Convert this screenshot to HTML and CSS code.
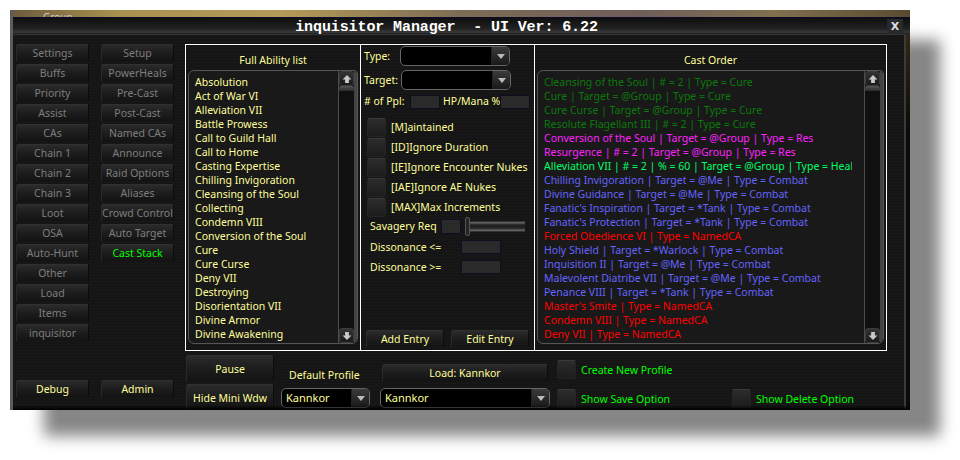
FILE: index.html
```html
<!DOCTYPE html>
<html lang="en">
<head>
<meta charset="utf-8">
<title>inquisitor Manager</title>
<link rel="stylesheet" href="styles.css">
</head>
<body>
<div class="window">
  <div class="backdrop"><span class="backdrop-label">Group</span></div>
  <header class="titlebar">
    <h1 class="title">inquisitor Manager  - UI Ver: 6.22</h1>
    <button class="close">X</button>
  </header>
  <div class="body">
    <nav class="sidebar">
      <div class="nav-cols">
        <div class="nav-col">
          <button class="nav">Settings</button>
          <button class="nav">Buffs</button>
          <button class="nav">Priority</button>
          <button class="nav">Assist</button>
          <button class="nav">CAs</button>
          <button class="nav">Chain 1</button>
          <button class="nav">Chain 2</button>
          <button class="nav">Chain 3</button>
          <button class="nav">Loot</button>
          <button class="nav">OSA</button>
          <button class="nav">Auto-Hunt</button>
          <button class="nav">Other</button>
          <button class="nav">Load</button>
          <button class="nav">Items</button>
          <button class="nav">inquisitor</button>
        </div>
        <div class="nav-col">
          <button class="nav">Setup</button>
          <button class="nav">PowerHeals</button>
          <button class="nav">Pre-Cast</button>
          <button class="nav">Post-Cast</button>
          <button class="nav">Named CAs</button>
          <button class="nav">Announce</button>
          <button class="nav">Raid Options</button>
          <button class="nav">Aliases</button>
          <button class="nav">Crowd Control</button>
          <button class="nav">Auto Target</button>
          <button class="nav active">Cast Stack</button>
        </div>
      </div>
      <div class="nav-bottom">
        <button class="nav gold">Debug</button>
        <button class="nav gold">Admin</button>
      </div>
    </nav>
    <main class="content">
      <div class="panels">
        <section class="panel panel-abilities">
          <h2 class="panel-title">Full Ability list</h2>
          <div class="listbox">
            <ul class="list gold-text">
              <li>Absolution</li>
              <li>Act of War VI</li>
              <li>Alleviation VII</li>
              <li>Battle Prowess</li>
              <li>Call to Guild Hall</li>
              <li>Call to Home</li>
              <li>Casting Expertise</li>
              <li>Chilling Invigoration</li>
              <li>Cleansing of the Soul</li>
              <li>Collecting</li>
              <li>Condemn VIII</li>
              <li>Conversion of the Soul</li>
              <li>Cure</li>
              <li>Cure Curse</li>
              <li>Deny VII</li>
              <li>Destroying</li>
              <li>Disorientation VII</li>
              <li>Divine Armor</li>
              <li>Divine Awakening</li>
            </ul>
            <div class="scroll">
              <span class="scroll-btn"><svg viewBox="0 0 9 9" class="arrow"><path d="M4.5 1L8.5 5H6.2v3H2.8V5H.5z"/></svg></span>
              <span class="scroll-thumb"></span>
              <span class="scroll-track"></span>
              <span class="scroll-btn"><svg viewBox="0 0 9 9" class="arrow"><path d="M4.5 8L.5 4h2.3V1h3.4v3h2.3z"/></svg></span>
            </div>
          </div>
        </section>
        <section class="panel panel-form">
          <div class="form-top">
            <div class="field-row">
              <label class="field-label type-label">Type:</label>
              <div class="combo combo-form"><span class="combo-value"></span><span class="combo-btn"><svg viewBox="0 0 10 6" class="caret"><path d="M0 0h10L5 6z"/></svg></span></div>
            </div>
            <div class="field-row">
              <label class="field-label target-label">Target:</label>
              <div class="combo combo-form"><span class="combo-value"></span><span class="combo-btn"><svg viewBox="0 0 10 6" class="caret"><path d="M0 0h10L5 6z"/></svg></span></div>
            </div>
            <div class="field-row ppl-row">
              <label class="field-label ppl-label">#&nbsp;of Ppl:</label>
              <span class="input input-s"></span>
              <label class="field-label hp-label">HP/Mana %</label>
              <span class="input input-s"></span>
            </div>
          </div>
          <div class="checks">
            <div class="check-row"><span class="check"></span><span>[M]aintained</span></div>
            <div class="check-row"><span class="check"></span><span>[ID]Ignore Duration</span></div>
            <div class="check-row"><span class="check"></span><span>[IE]Ignore Encounter Nukes</span></div>
            <div class="check-row"><span class="check"></span><span>[IAE]Ignore AE Nukes</span></div>
            <div class="check-row"><span class="check"></span><span>[MAX]Max Increments</span></div>
          </div>
          <div class="savagery">
            <span class="savagery-label">Savagery Req</span>
            <span class="input input-xs"></span>
            <span class="slider"><span class="slider-thumb"></span></span>
          </div>
          <div class="diss-row"><span class="diss-label">Dissonance &lt;=</span><span class="input input-m"></span></div>
          <div class="diss-row"><span class="diss-label">Dissonance &gt;=</span><span class="input input-m"></span></div>
          <div class="entry-btns">
            <button class="nav gold entry">Add Entry</button>
            <button class="nav gold entry">Edit Entry</button>
          </div>
        </section>
        <section class="panel panel-order">
          <h2 class="panel-title">Cast Order</h2>
          <div class="listbox">
            <ul class="list order">
              <li class="c-cure">Cleansing of the Soul | # = 2 | Type = Cure</li>
              <li class="c-cure">Cure | Target = @Group | Type = Cure</li>
              <li class="c-cure">Cure Curse | Target = @Group | Type = Cure</li>
              <li class="c-cure">Resolute Flagellant III | # = 2 | Type = Cure</li>
              <li class="c-res">Conversion of the Soul | Target = @Group | Type = Res</li>
              <li class="c-res">Resurgence | # = 2 | Target = @Group | Type = Res</li>
              <li class="c-heal">Alleviation VII | # = 2 | % = 60 | Target = @Group | Type = Heal</li>
              <li class="c-combat">Chilling Invigoration | Target = @Me | Type = Combat</li>
              <li class="c-combat">Divine Guidance | Target = @Me | Type = Combat</li>
              <li class="c-combat">Fanatic's Inspiration | Target = *Tank | Type = Combat</li>
              <li class="c-combat">Fanatic's Protection | Target = *Tank | Type = Combat</li>
              <li class="c-named">Forced Obedience VI | Type = NamedCA</li>
              <li class="c-combat">Holy Shield | Target = *Warlock | Type = Combat</li>
              <li class="c-combat">Inquisition II | Target = @Me | Type = Combat</li>
              <li class="c-combat">Malevolent Diatribe VII | Target = @Me | Type = Combat</li>
              <li class="c-combat">Penance VIII | Target = *Tank | Type = Combat</li>
              <li class="c-named">Master's Smite | Type = NamedCA</li>
              <li class="c-named">Condemn VIII | Type = NamedCA</li>
              <li class="c-named">Deny VII | Type = NamedCA</li>
            </ul>
            <div class="scroll">
              <span class="scroll-btn"><svg viewBox="0 0 9 9" class="arrow"><path d="M4.5 1L8.5 5H6.2v3H2.8V5H.5z"/></svg></span>
              <span class="scroll-thumb"></span>
              <span class="scroll-track"></span>
              <span class="scroll-btn"><svg viewBox="0 0 9 9" class="arrow"><path d="M4.5 8L.5 4h2.3V1h3.4v3h2.3z"/></svg></span>
            </div>
          </div>
        </section>
      </div>
      <div class="footer">
        <div class="footer-btns">
          <button class="nav gold big">Pause</button>
          <button class="nav gold big">Hide Mini Wdw</button>
        </div>
        <div class="profile-default">
          <span class="gold-text default-label">Default Profile</span>
          <div class="combo combo-small"><span class="combo-value">Kannkor</span><span class="combo-btn"><svg viewBox="0 0 10 6" class="caret"><path d="M0 0h10L5 6z"/></svg></span></div>
        </div>
        <div class="profile-load">
          <button class="nav gold load">Load: Kannkor</button>
          <div class="combo combo-large"><span class="combo-value">Kannkor</span><span class="combo-btn"><svg viewBox="0 0 10 6" class="caret"><path d="M0 0h10L5 6z"/></svg></span></div>
        </div>
        <div class="profile-options">
          <div class="option-row"><span class="check"></span><span>Create New Profile</span></div>
          <div class="option-row"><span class="check"></span><span class="save-label">Show Save Option</span><span class="check"></span><span>Show Delete Option</span></div>
        </div>
      </div>
    </main>
  </div>
</div>
</body>
</html>
```

FILE: styles.css
```css
* { box-sizing: border-box; margin: 0; padding: 0; }
html, body { width: 960px; height: 460px; overflow: hidden; background: #fff; }
body { padding: 10px 50px 50px 10px; font: 10.5px/14px "Noto Sans", sans-serif; }
ul { list-style: none; }
button { font: inherit; }

.window {
  position: relative; width: 900px; height: 400px; display: flex; flex-direction: column; overflow: hidden;
  background: linear-gradient(#3a2f18, #0c0b08 30%, #0c0b08);
  border-left: 3px solid #5c5c5c;
  box-shadow: 32px 28px 14px -2px #868686;
  color: #ffff99;
}
.window::after {
  content: ""; position: absolute; left: 0; right: 0; bottom: 0; height: 5px;
  background: linear-gradient(transparent, #000);
}
.backdrop {
  height: 7px; flex: none; overflow: hidden; margin-left: -3px;
  background: linear-gradient(90deg, #6d5a3c 0, #a8914f 12%, #b49a58 30%, #7d6c55 50%, #6f5e5a 70%, #80704f 85%, #5a4a30 100%);
}
.backdrop-label { display: block; padding-left: 33px; color: #ccc; line-height: 14px; font-size: 10px; }
.titlebar {
  height: 17px; flex: none; display: flex; align-items: center; justify-content: center; position: relative;
  background: linear-gradient(#0a0a2a 0 1px, #0e0e0e 1px, #222 70%, #3a3a3a 90%, #161616);
  padding-top: 4px;
}
.title { font: bold 15px/14px "Liberation Mono", monospace; color: #fff; white-space: pre; letter-spacing: -.1px; padding-right: 30px; }
.close {
  position: absolute; right: 7px; top: 2px; width: 16px; height: 15px; border: 0;
  background: #262a2c; color: #ddd; font: bold 11px/15px "DejaVu Sans", sans-serif;
}
.body {
  flex: 1; display: flex; min-height: 0; margin-right: 4px;
  background: repeating-linear-gradient(0deg, #151515 0 2px, #181818 2px 3px);
  border-top: 1px solid #333; border-right: 2px solid #3a3a3a;
}

.sidebar { width: 172px; flex: none; padding: 9px 0 13px 3px; display: flex; flex-direction: column; justify-content: space-between; }
.nav-cols, .nav-bottom { display: flex; gap: 12px; }
.nav-col { display: flex; flex-direction: column; gap: 3px; width: 73px; }
.nav {
  display: block; width: 73px; height: 17px; padding: 0; border: 0; border-top: 1px solid #303030; border-left: 1px solid #2a2a2a; border-right: 1px solid #0c0c0c;
  border-radius: 2px 2px 0 0; color: #7e7e7e; line-height: 15px; text-align: center; white-space: nowrap;
  background: linear-gradient(#2b2b2b, #1e1e1e 45%, #131313);
}
.nav.gold { color: #ffff99; }
.nav.active { color: #00ff00; }

.content { flex: 1; display: flex; flex-direction: column; min-width: 0; }
.panels { display: flex; margin-top: 9px; height: 307px; flex: none; }
.panel { border: 1px solid #fff; height: 307px; }
.panel-abilities { width: 176px; padding: 0 2px; }
.panel-form { width: 175px; margin-left: -1px; padding: 1px 2px 3px 3px; display: flex; flex-direction: column; }
.panel-order { width: 353px; margin-left: -1px; padding: 0 2px; }
.panel-title { font: inherit; font-weight: 400; height: 25px; line-height: 30px; text-align: center; color: #ffff99; }

.listbox {
  display: flex; height: 274px; border: 1px solid #555;
  border-radius: 6px 4px 6px 6px; overflow: hidden; background: #191919;
}
.list { flex: 1; min-width: 0; padding: 4px 0 0 6px; overflow: hidden; white-space: nowrap; }
.gold-text { color: #ffff99; }
.scroll { width: 19px; flex: none; display: flex; flex-direction: column; background: #101010; border-left: 1px solid #4c4c4c; border-right: 3px solid #444; }
.scroll-btn { height: 15px; flex: none; display: flex; align-items: center; justify-content: center; background: linear-gradient(#333, #1a1a1a); border: 1px solid #3c3c3c; border-radius: 3px; }
.arrow { width: 10px; height: 10px; fill: #c8c8c8; }
.scroll-thumb { height: 5px; flex: none; background: linear-gradient(#555, #2a2a2a); border-radius: 2px 2px 0 0; }
.scroll-track { flex: 1; }

.order { padding-right: 12px; }
.order li { overflow: hidden; }
.c-cure { color: #0b7a0b; }
.c-res { color: #ff22ff; }
.c-heal { color: #00ff66; }
.c-combat { color: #6464ff; }
.c-named { color: #ff0000; }

.form-top { display: flex; flex-direction: column; gap: 4px; }
.field-row { display: flex; align-items: center; height: 20px; }
.field-label { white-space: pre; }
.type-label { width: 36px; }
.target-label { width: 37px; }
.field-row .combo-form { width: 110px; }
.ppl-row { margin-top: 1px; height: 15px; align-items: flex-start; line-height: 13px; }
.ppl-label { width: 46px; }
.hp-label { width: 57px; margin-left: 3px; }

.combo { display: flex; height: 20px; border: 1px solid #666; border-radius: 5px; background: #000; overflow: hidden; flex: none; }
.combo-value { flex: 1; padding-left: 4px; line-height: 18px; color: #ffff99; font-size: 11px; }
.combo-btn { width: 18px; flex: none; display: flex; align-items: center; justify-content: center; background: linear-gradient(#3a3a3a, #191919); border-left: 1px solid #222; }
.caret { width: 8px; height: 5px; fill: #bbb; }

.input { display: block; flex: none; height: 14px; background: #2a2a2a; border: 1px solid #0e0e22; }
.input-s { width: 30px; }
.input-xs { width: 20px; height: 15px; }
.input-m { width: 40px; }

.checks { display: flex; flex-direction: column; margin-top: 7px; }
.check-row { display: flex; align-items: center; gap: 5px; height: 20px; padding-left: 3px; white-space: nowrap; }
.check { display: block; flex: none; width: 19px; height: 19px; background: linear-gradient(#2c2c2c, #1c1c1c); border: 1px solid #242424; border-top-color: #3a3a3a; border-radius: 2px; }

.savagery { display: flex; align-items: center; padding: 0 0 2px 6px; height: 20px; white-space: nowrap; }
.savagery-label { width: 71px; }
.slider { position: relative; display: block; flex: none; width: 60px; height: 11px; margin-left: 4px; background: linear-gradient(#1c1c1c, #666 15%, #222 35%, #222 65%, #666 85%, #1c1c1c); }
.slider-thumb { position: absolute; left: 0; top: -4px; width: 5px; height: 19px; background: #262626; border: 1px solid #555; border-radius: 2px; }
.diss-row { display: flex; align-items: center; height: 20px; padding: 0 0 1px 6px; white-space: nowrap; }
.diss-label { width: 91px; }

.entry-btns { display: flex; gap: 7px; margin-top: auto; padding-left: 2px; }
.entry { width: 78px; height: 17px; }

.footer { flex: 1; display: flex; padding: 4px 0 0 1px; min-height: 0; overflow: hidden; }
.footer-btns { display: flex; flex-direction: column; gap: 3px; width: 95px; flex: none; }
.big { width: 88px; height: 26px; line-height: 24px; flex: none; }
.profile-default { width: 99px; flex: none; display: flex; flex-direction: column; padding-top: 13px; gap: 6px; align-items: flex-start; }
.default-label { padding-left: 8px; }
.combo-small { width: 89px; }
.profile-load { width: 170px; flex: none; display: flex; flex-direction: column; align-items: flex-start; padding-top: 9px; gap: 7px; }
.load { width: 166px; margin-left: 2px; flex: none; }
.combo-large { width: 170px; }
.profile-options { display: flex; flex-direction: column; gap: 10px; padding: 5px 0 0 7px; color: #00ff00; }
.option-row { display: flex; align-items: center; gap: 5px; height: 19px; white-space: nowrap; flex: none; }
.save-label { width: 146px; }
```
